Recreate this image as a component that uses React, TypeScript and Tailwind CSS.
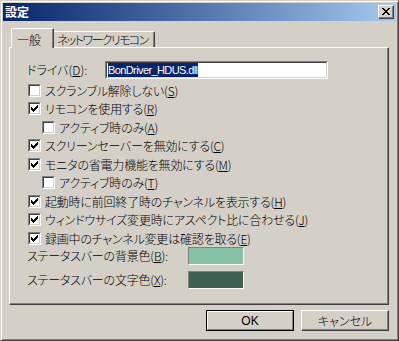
import React from "react";

const CHECK: [number, number, number][] = [
  [6, 0, 1],
  [5, 1, 2],
  [0, 2, 1],
  [4, 2, 3],
  [0, 3, 2],
  [3, 3, 3],
  [0, 4, 5],
  [1, 5, 3],
  [2, 6, 1],
];

const XMARK: [number, number, number][] = [
  [0, 0, 2], [6, 0, 2],
  [1, 1, 2], [5, 1, 2],
  [2, 2, 4],
  [3, 3, 2],
  [2, 4, 4],
  [1, 5, 2], [5, 5, 2],
  [0, 6, 2], [6, 6, 2],
];

function Check({ checked }: { checked: boolean }) {
  return (
    <span className="block w-[13px] h-[13px] shrink-0 border border-t-[#808080] border-l-[#808080] border-b-white border-r-white">
      <span className="block w-full h-full bg-white border border-t-[#404040] border-l-[#404040] border-b-[#d4d0c8] border-r-[#d4d0c8]">
        {checked && (
          <svg width="9" height="9" viewBox="0 0 9 9" shapeRendering="crispEdges" className="block">
            {CHECK.map(([x, y, w], i) => (
              <rect key={i} x={x + 1} y={y + 1} width={w} height={1} fill="#000" />
            ))}
          </svg>
        )}
      </span>
    </span>
  );
}

function Row({
  checked,
  indent,
  mt,
  children,
}: {
  checked: boolean;
  indent?: boolean;
  mt: string;
  children: React.ReactNode;
}) {
  return (
    <div className={`flex items-center h-[13px] ${mt} ${indent ? "pl-[14px]" : ""}`}>
      <Check checked={checked} />
      <span className="ml-[4px] whitespace-nowrap leading-[13px] tracking-[-0.2px]">{children}</span>
    </div>
  );
}

export default function App() {
  return (
    <div className="w-[399px] h-[341px] bg-[#d4d0c8] border border-t-[#d4d0c8] border-l-[#d4d0c8] border-b-[#404040] border-r-[#404040] shadow-[inset_1px_1px_#ffffff,inset_-1px_-1px_#808080] p-[2px] text-black text-[12px] leading-none font-light font-['Noto_Sans_CJK_JP',sans-serif] [font-feature-settings:'palt']">
      {/* Title bar */}
      <div className="h-[18px] flex items-center justify-between bg-gradient-to-r from-[#0a246a] to-[#a6caf0] pl-[2px] pr-[2px]">
        <span className="text-white font-bold text-[12px] leading-[18px]">設定</span>
        <span className="block w-[16px] h-[14px] bg-[#d4d0c8] border border-t-white border-l-white border-b-[#404040] border-r-[#404040] shadow-[inset_-1px_-1px_#808080]">
          <svg width="14" height="12" viewBox="0 0 14 12" shapeRendering="crispEdges" className="block">
            {XMARK.map(([x, y, w], i) => (
              <rect key={i} x={x + 3} y={y + 2} width={w} height={1} fill="#000" />
            ))}
          </svg>
        </span>
      </div>

      <div className="pl-[6px] pr-[7px] pt-[7px]">
        {/* Tabs */}
        <div className="flex items-end h-[19px] ml-[2px]">
          <div className="relative z-10 h-[20px] mb-[-1px] bg-[#d4d0c8] border-t border-l border-t-white border-l-white border-r border-r-[#404040] shadow-[inset_-1px_0_#808080] rounded-tl-[2px] pl-[5px] pr-[12px] pt-[5px]">
            <span className="text-[12px] leading-[12px]">一般</span>
          </div>
          <div className="h-[16px] bg-[#d4d0c8] border-t border-t-white border-r border-r-[#404040] shadow-[inset_-1px_0_#808080] rounded-tr-[2px] pl-[3px] pr-[6px] pt-[2px]">
            <span className="text-[12px] leading-[12px] whitespace-nowrap tracking-[-1.6px]">ネットワークリモコン</span>
          </div>
        </div>

        {/* Panel */}
        <div className="h-[258px] border border-t-white border-l-white border-b-[#404040] border-r-[#404040] shadow-[inset_-1px_-1px_#808080] pt-[13px] pl-[18px]">
          <div className="flex items-center h-[18px]">
            <span className="w-[78px] ml-[-1px] whitespace-nowrap">
              ドライバ(<u>D</u>):
            </span>
            <div className="w-[223px] h-[18px] bg-white border border-t-[#808080] border-l-[#808080] border-b-white border-r-white">
              <div className="w-full h-full border border-t-[#404040] border-l-[#404040] border-b-[#d4d0c8] border-r-[#d4d0c8] pl-[1px]">
                <span className="inline-block h-[14px] leading-[14px] bg-[#0a246a] text-white font-normal font-['Liberation_Sans',sans-serif] text-[11px] tracking-[-0.6px] pr-[1px]">
                  BonDriver_HDUS.dll
                </span>
              </div>
            </div>
          </div>

          <div className="mt-[5px]">
            <Row checked={false} mt="">
              スクランブル解除しない(<u>S</u>)
            </Row>
            <Row checked={true} mt="mt-[5px]">
              リモコンを使用する(<u>R</u>)
            </Row>
            <Row checked={false} indent mt="mt-[6px]">
              アクティブ時のみ(<u>A</u>)
            </Row>
            <Row checked={true} mt="mt-[5px]">
              スクリーンセーバーを無効にする(<u>C</u>)
            </Row>
            <Row checked={true} mt="mt-[6px]">
              モニタの省電力機能を無効にする(<u>M</u>)
            </Row>
            <Row checked={false} indent mt="mt-[5px]">
              アクティブ時のみ(<u>T</u>)
            </Row>
            <Row checked={true} mt="mt-[6px]">
              起動時に前回終了時のチャンネルを表示する(<u>H</u>)
            </Row>
            <Row checked={true} mt="mt-[5px]">
              ウィンドウサイズ変更時にアスペクト比に合わせる(<u>J</u>)
            </Row>
            <Row checked={true} mt="mt-[6px]">
              録画中のチャンネル変更は確認を取る(<u>E</u>)
            </Row>
          </div>

          <div className="flex items-center h-[18px] mt-[2px]">
            <span className="w-[161px] ml-[-1px] whitespace-nowrap tracking-[-0.2px]">
              ステータスバーの背景色(<u>B</u>):
            </span>
            <div className="w-[56px] h-[18px] bg-[#86c3a6] border border-t-[#808080] border-l-[#808080] border-b-white border-r-white" />
          </div>
          <div className="flex items-center h-[18px] mt-[6px]">
            <span className="w-[161px] ml-[-1px] whitespace-nowrap tracking-[-0.2px]">
              ステータスバーの文字色(<u>X</u>):
            </span>
            <div className="w-[56px] h-[18px] bg-[#3e614f] border border-t-[#808080] border-l-[#808080] border-b-white border-r-white" />
          </div>
        </div>

        {/* Buttons */}
        <div className="flex justify-end gap-[7px] mt-[5px]">
          <div className="w-[88px] h-[21px] border border-black">
            <div className="w-full h-full flex items-center justify-center border border-t-white border-l-white border-b-[#808080] border-r-[#808080]">
              <span className="font-normal font-['Liberation_Sans',sans-serif] text-[12px]">OK</span>
            </div>
          </div>
          <div className="w-[88px] h-[21px] flex items-center justify-center border border-t-white border-l-white border-b-[#404040] border-r-[#404040] shadow-[inset_-1px_-1px_#808080]">
            <span className="text-[12px]">キャンセル</span>
          </div>
        </div>
      </div>
    </div>
  );
}
